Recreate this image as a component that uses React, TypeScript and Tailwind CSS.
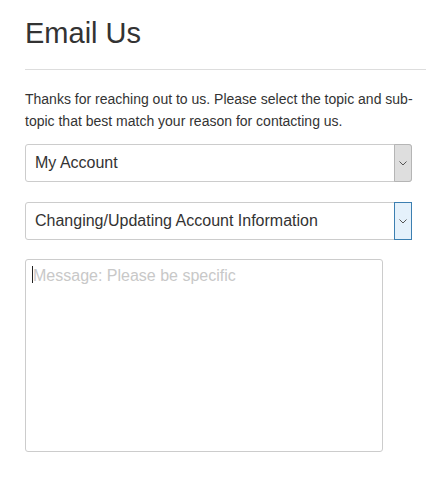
import React from "react";

function Chevron() {
  return (
    <svg width="8" height="5" viewBox="0 0 8 5" fill="none">
      <path d="M0.5 0.5L4 4L7.5 0.5" stroke="#555" strokeWidth="1" />
    </svg>
  );
}

function FakeSelect({ value, active }: { value: string; active?: boolean }) {
  return (
    <div className="flex h-[38px] w-[387px] rounded-[3px] border border-[#cccccc] bg-white">
      <div className="flex flex-1 items-center pl-[9px] text-[16px] text-[#333]">{value}</div>
      <div
        className={
          active
            ? "-my-px -mr-px flex w-[18px] items-center justify-center border border-[#3c7fb1] bg-[#e5f1fb]"
            : "-my-px -mr-px flex w-[18px] items-center justify-center rounded-r-[3px] border border-[#b5b5b5] bg-[#dedede]"
        }
      >
        <Chevron />
      </div>
    </div>
  );
}

export default function App() {
  return (
    <div className="min-h-[480px] bg-white pl-[25px] pt-[17px] font-['Liberation_Sans',Arial,sans-serif] text-[#333]">
      <h1 className="text-[29px] leading-[33px]">Email Us</h1>
      <hr className="mt-[19px] border-t border-[#dddddd]" />
      <p className="mt-[18px] w-[392px] text-[14px] leading-[22px]">
        Thanks for reaching out to us. Please select the topic and sub-topic that best match your reason for contacting us.
      </p>
      <div className="mt-[12px] flex flex-col gap-[20px]">
        <FakeSelect value="My Account" />
        <FakeSelect value="Changing/Updating Account Information" active />
      </div>
      <div className="relative mt-[19px] w-[358px]">
        <textarea
          className="block h-[193px] w-full resize-none rounded-[3px] border border-[#cccccc] bg-white pl-[7px] pt-[6px] text-[16px] leading-[20px] text-[#333] outline-none placeholder:text-[#c8c8c8]"
          placeholder="Message: Please be specific"
        />
        <span className="absolute left-[7px] top-[7px] h-[17px] w-px bg-[#222]" />
      </div>
    </div>
  );
}
